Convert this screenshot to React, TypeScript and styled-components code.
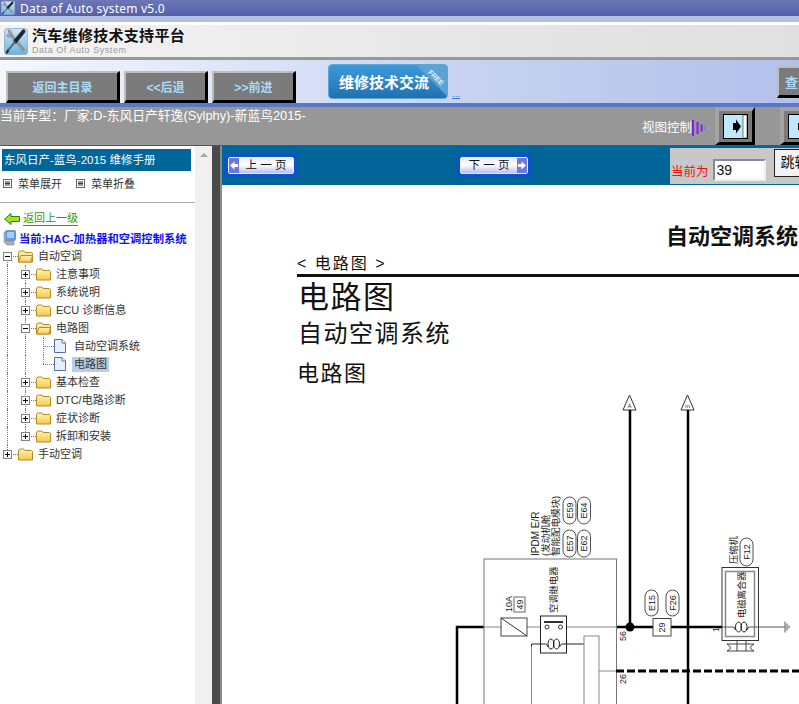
import styled, { createGlobalStyle } from "styled-components";

const GlobalStyle = createGlobalStyle`
  html, body {
    margin: 0;
    padding: 0;
    overflow: hidden;
    background: #fff;
  }
  * {
    box-sizing: border-box;
  }
`;

const CJK = `"Liberation Sans", "Noto Sans CJK SC", sans-serif`;

const Page = styled.div`
  width: 799px;
  height: 704px;
  overflow: hidden;
  display: flex;
  flex-direction: column;
  font-family: ${CJK};
`;

const TitleBar = styled.div`
  height: 16px;
  flex: none;
  display: flex;
  align-items: center;
  gap: 5px;
  padding-left: 1px;
  background: linear-gradient(to bottom, #6c77b8, #545fa8);
  color: #fff;
  font-family: "Noto Sans", sans-serif;
  font-size: 12px;
  letter-spacing: 0.2px;
`;

const TitleStrip = styled.div`
  height: 9px;
  flex: none;
  background: linear-gradient(to bottom, #b4c0e2 0, #b4c0e2 6px, #fff 6px);
`;

const Header = styled.div`
  height: 34px;
  flex: none;
  display: flex;
  align-items: center;
  gap: 4px;
  padding-left: 4px;
  background: linear-gradient(to right, #f4f4f4, #e4e4e4 70%, #e0e0e0);
  border-bottom: 2px solid #999;
`;

const BrandText = styled.div`
  display: flex;
  flex-direction: column;
  line-height: 1;
`;

const BrandName = styled.div`
  font-size: 15px;
  font-weight: 700;
  color: #111;
  letter-spacing: 0.3px;
  margin-bottom: 3px;
`;

const BrandSub = styled.div`
  font-size: 9px;
  letter-spacing: 0.55px;
  color: #999;
`;

const Toolbar = styled.div`
  height: 44px;
  flex: none;
  position: relative;
  display: flex;
  align-items: flex-end;
  padding-left: 6px;
  background: linear-gradient(to right, #f4f7fe, #c6d2f0 60%, #b3c0ea);
  border-top: 1px solid #8a93b0;
`;

const BevelButton = styled.button<{ $w: number; $ml?: number }>`
  width: ${(p) => p.$w}px;
  height: 32px;
  margin-left: ${(p) => p.$ml ?? 0}px;
  flex: none;
  padding: 0;
  background: #7b7b7b;
  border-style: solid;
  border-width: 2px 3px 3px 2px;
  border-color: #bdbdbd #000 #000 #bdbdbd;
  color: #a8dcfa;
  font-family: ${CJK};
  font-size: 12px;
  font-weight: 700;
`;

const ExchangeBlock = styled.div`
  display: flex;
  align-items: flex-end;
  align-self: flex-start;
  margin: 4px 0 0 32px;
  flex: none;
`;

const ExchangeButton = styled.div`
  position: relative;
  width: 120px;
  height: 35px;
  overflow: hidden;
  display: flex;
  align-items: center;
  padding-left: 10px;
  border-radius: 4px;
  background: linear-gradient(to bottom, #3d9ad8, #2c83c4 60%, #1f70ad);
  border: 1px solid #5aa6d8;
  color: #fff;
  font-size: 15px;
  font-weight: 700;
`;

const FreeCorner = styled.span`
  position: absolute;
  top: 0;
  right: 0;
  width: 31px;
  height: 31px;
  background: #5ba3d5;
  clip-path: polygon(0 0, 100% 0, 100% 100%);
`;

const FreeText = styled.span`
  position: absolute;
  top: 8px;
  left: 7px;
  width: 26px;
  text-align: center;
  transform: rotate(45deg);
  color: #e6f4fc;
  font-size: 7px;
  line-height: 9px;
  font-weight: 700;
`;

const MoreLink = styled.span`
  margin-left: 4px;
  color: #2b7de0;
  font-size: 10px;
  line-height: 8px;
  border-bottom: 1px solid #2b7de0;
`;

const QueryButton = styled(BevelButton)`
  margin-left: auto;
  align-self: flex-start;
  margin-top: 6px;
  margin-right: -30px;
  text-align: left;
  padding-left: 6px;
  font-size: 13px;
`;

const ToolbarEdge = styled.div`
  height: 4px;
  flex: none;
  background: #5a78c8;
`;

const ModelBar = styled.div`
  height: 39px;
  flex: none;
  display: flex;
  justify-content: space-between;
  background: #979797;
  color: #fff;
  font-size: 12.8px;
  border-bottom: 1px solid #555;
`;

const ModelText = styled.div`
  padding-top: 1px;
  line-height: 16px;
  white-space: nowrap;
`;

const ViewControls = styled.div`
  display: flex;
  align-items: flex-end;
  flex: none;
  width: 157px;
`;

const ViewLabel = styled.span`
  font-size: 12.5px;
  line-height: 16px;
  margin-bottom: 9px;
  white-space: nowrap;
`;

const ViewButton = styled.div<{ $ml: number }>`
  width: 40px;
  height: 38px;
  flex: none;
  margin-left: ${(p) => p.$ml}px;
  display: flex;
  align-items: center;
  justify-content: center;
  background: #7b7b7b;
  border-style: solid;
  border-width: 4px 3px 3px 4px;
  border-color: #a3a3a3 #000 #000 #a3a3a3;
`;

const Main = styled.div`
  flex: 1;
  min-height: 0;
  display: flex;
`;

const Sidebar = styled.div`
  width: 195px;
  flex: none;
  padding-top: 3px;
  background: #fff;
  color: #333;
  font-size: 12px;
`;

const ManualTitle = styled.div`
  height: 22px;
  margin: 0 4px 0 2px;
  padding-left: 2px;
  line-height: 22px;
  background: #006699;
  color: #fff;
  font-size: 11.5px;
  white-space: nowrap;
`;

const MenuRow = styled.div`
  height: 31px;
  display: flex;
  align-items: center;
  padding: 0 0 7px 3px;
`;

const MenuItem = styled.span`
  display: flex;
  align-items: center;
  gap: 6px;
  width: 73px;
  font-size: 11px;
`;

const Divider = styled.div`
  height: 1px;
  background: #aaa;
`;

const BackRow = styled.div`
  height: 19px;
  margin-top: 6px;
  display: flex;
  align-items: center;
  gap: 3px;
  padding-left: 4px;
`;

const BackLink = styled.span`
  color: #2e9a10;
  font-size: 11px;
  line-height: 14px;
  border-bottom: 1px solid #2e9a10;
`;

const CurrentRow = styled.div`
  height: 19px;
  display: flex;
  align-items: center;
  gap: 3px;
  padding-left: 3px;
  color: #1010f0;
  font-size: 11.3px;
  font-weight: 700;
  white-space: nowrap;
`;

const TreeLine = styled.div<{ $leaf?: boolean; $level: number }>`
  position: relative;
  height: 18px;
  display: flex;
  align-items: center;
  padding-left: ${(p) => (p.$leaf ? 54 : 3 + p.$level * 18)}px;
  font-size: 11px;
  white-space: nowrap;
`;

const Guide = styled.i<{ $half?: boolean; $start?: boolean }>`
  position: absolute;
  top: ${(p) => (p.$start ? "50%" : "0")};
  height: ${(p) => (p.$half || p.$start ? "50%" : "100%")};
  width: 0;
  border-left: 1px dotted #777;
`;

const Branch = styled.i`
  position: absolute;
  top: 50%;
  width: 11px;
  height: 0;
  border-top: 1px dotted #777;
`;

const Expander = styled.span<{ $open?: boolean }>`
  position: relative;
  z-index: 1;
  width: 9px;
  height: 9px;
  flex: none;
  margin-right: 6px;
  background: #fff;
  border: 1px solid #808080;

  &::before {
    content: "";
    position: absolute;
    left: 1px;
    top: 3px;
    width: 5px;
    height: 1px;
    background: #000;
  }

  &::after {
    content: "";
    display: ${(p) => (p.$open ? "none" : "block")};
    position: absolute;
    left: 3px;
    top: 1px;
    width: 1px;
    height: 5px;
    background: #000;
  }
`;

const NodeLabel = styled.span<{ $selected?: boolean; $leaf?: boolean }>`
  margin-left: ${(p) => (p.$selected ? 6 : p.$leaf ? 8 : 5)}px;
  padding: 0 ${(p) => (p.$selected ? 2 : 0)}px;
  line-height: 15px;
  background: ${(p) => (p.$selected ? "#b9cde8" : "transparent")};
`;

const Scrollbar = styled.div`
  width: 17px;
  flex: none;
  display: flex;
  justify-content: center;
  padding-top: 7px;
  background: #f0f0f0;
`;

const ScrollArrow = styled.div`
  width: 0;
  height: 0;
  border-left: 4px solid transparent;
  border-right: 4px solid transparent;
  border-bottom: 4px solid #a8a8a8;
`;

const Splitter = styled.div`
  width: 10px;
  flex: none;
  background: #4a4a4a;
  border-right: 2px solid #8a8a8a;
`;

const Content = styled.div`
  flex: 1;
  min-width: 0;
  display: flex;
  flex-direction: column;
  overflow: hidden;
`;

const PagerBar = styled.div`
  position: relative;
  height: 39px;
  flex: none;
  display: flex;
  align-items: flex-start;
  padding: 7px 0 0 2px;
  background: #006699;
`;

const PagerFrame = styled.div<{ $ml?: number }>`
  margin-left: ${(p) => p.$ml ?? 0}px;
  padding: 4px;
  background: #0a55c0;
`;

const PagerButton = styled.div<{ $w: number }>`
  width: ${(p) => p.$w}px;
  height: 17px;
  display: flex;
  align-items: stretch;
  border: 1px solid #eef0ff;
  border-radius: 2px;
  overflow: hidden;
  background: linear-gradient(to bottom, #e8eafc, #fff 45%, #b9bdf0);
  color: #111;
  font-size: 11.5px;
  line-height: 15px;
`;

const PagerLabel = styled.span`
  flex: 1;
  text-align: center;
  white-space: nowrap;
`;

const PagerArrow = styled.span`
  width: 10px;
  flex: none;
  display: flex;
  align-items: center;
  justify-content: center;
  background: #6a78e0;
`;

const JumpPanel = styled.div`
  position: absolute;
  top: 2px;
  left: 448px;
  height: 36px;
  display: flex;
  align-items: flex-start;
  background: #c8c8c8;
`;

const CurrentLabel = styled.span`
  flex: none;
  margin: 16px 0 0 1px;
  color: #f01010;
  font-size: 12.5px;
  line-height: 16px;
  white-space: nowrap;
`;

const PageInput = styled.div`
  flex: none;
  width: 53px;
  height: 22px;
  margin: 11px 0 0 4px;
  padding-left: 2px;
  background: #fff;
  border-style: solid;
  border-width: 2px;
  border-color: #8a8a8a #eee #eee #8a8a8a;
  color: #111;
  font-size: 14px;
  line-height: 18px;
`;

const JumpButton = styled.div`
  flex: none;
  width: 48px;
  height: 28px;
  margin: 1px 0 0 8px;
  padding-left: 6px;
  background: #f2f2f2;
  border: 1px solid #222;
  border-right: none;
  color: #111;
  font-size: 14px;
  line-height: 24px;
  white-space: nowrap;
`;

const Doc = styled.div`
  flex: 1;
  min-height: 0;
  overflow: hidden;
  padding-top: 38px;
  background: #fff;
  color: #111;
  font-family: ${CJK};
`;

const DocTitle = styled.div`
  margin-left: 444px;
  height: 27px;
  font-size: 22px;
  line-height: 27px;
  font-weight: 700;
  white-space: nowrap;
`;

const SectionTag = styled.div`
  margin: 4px 0 0 75px;
  height: 20px;
  font-size: 16px;
  line-height: 20px;
  letter-spacing: 2px;
  white-space: nowrap;
`;

const SectionRule = styled.div`
  margin-left: 75px;
  height: 3px;
  background: #111;
`;

const DocHeading = styled.div<{ $size: number; $h: number; $ml: number; $mt?: number }>`
  margin: ${(p) => p.$mt ?? 0}px 0 0 ${(p) => p.$ml}px;
  height: ${(p) => p.$h}px;
  font-size: ${(p) => p.$size}px;
  line-height: ${(p) => p.$h}px;
  letter-spacing: 1.5px;
  white-space: nowrap;
`;

const Diagram = styled.svg`
  display: block;
  flex: none;
  font-family: ${CJK};
`;

function AppIcon({ w, h }: { w: number; h: number }) {
  return (
    <svg width={w} height={h} viewBox="0 0 32 32" preserveAspectRatio="none" style={{ flex: "none" }}>
      <defs>
        <linearGradient id="appBg" x1="0" y1="0" x2="0" y2="1">
          <stop offset="0" stopColor="#cfe6f6" />
          <stop offset="1" stopColor="#6fb2de" />
        </linearGradient>
      </defs>
      <rect x="0.5" y="0.5" width="31" height="31" rx="4" fill="url(#appBg)" stroke="#7fa8c8" />
      <path d="M8 7 L27 27" stroke="#8d949c" strokeWidth="4" />
      <path d="M3 9 L7 11 L11 7 L9 3 L5 2 L7 6 L6 7 Z" fill="#a2a8b0" stroke="#666" strokeWidth="0.6" />
      <path d="M26 4 L15 16" stroke="#1c2430" strokeWidth="5" strokeLinecap="round" />
      <path d="M15 16 L5 27" stroke="#566878" strokeWidth="2.5" />
      <path d="M6 26 L3 30" stroke="#20303c" strokeWidth="3" />
    </svg>
  );
}

function MenuIcon() {
  return (
    <svg width="9" height="9" viewBox="0 0 9 9" style={{ flex: "none" }}>
      <rect x="0.5" y="0.5" width="8" height="8" fill="#fff" stroke="#666" />
      <path d="M2 3H7M2 4.5H7M2 6H7" stroke="#333" />
    </svg>
  );
}

function FolderIcon({ open }: { open?: boolean }) {
  return (
    <svg width="15" height="13" viewBox="0 0 15 13" style={{ flex: "none" }}>
      <defs>
        <linearGradient id="folderFill" x1="0" y1="0" x2="0" y2="1">
          <stop offset="0" stopColor="#fff3b8" />
          <stop offset="1" stopColor="#f3c94c" />
        </linearGradient>
      </defs>
      <path d="M0.5 3 L1.5 1 H6 L7 2.5 H13.5 L14.5 3.5 V12 H0.5 Z" fill="url(#folderFill)" stroke="#b98c22" />
      {open && <path d="M0.5 12 L3 5.5 H14.5 L13 12 Z" fill="url(#folderFill)" stroke="#b98c22" />}
    </svg>
  );
}

function DocIcon() {
  return (
    <svg width="12" height="14" viewBox="0 0 12 14" style={{ flex: "none" }}>
      <path d="M0.5 0.5 H8 L11.5 4 V13.5 H0.5 Z" fill="#e8f0fb" stroke="#5a6cb0" />
      <path d="M8 0.5 V4 H11.5" fill="#fff" stroke="#5a6cb0" />
    </svg>
  );
}

function BackIcon() {
  return (
    <svg width="16" height="12" viewBox="0 0 16 12" style={{ flex: "none" }}>
      <path d="M0.5 6 L7 0.5 V3.5 H15.5 V8.5 H7 V11.5 Z" fill="#a8e020" stroke="#1f8a10" />
    </svg>
  );
}

function ComputerIcon() {
  return (
    <svg width="13" height="16" viewBox="0 0 13 16" style={{ flex: "none" }}>
      <rect x="2.5" y="0.5" width="10" height="10" rx="1" fill="#5a9ae8" stroke="#8a94a8" />
      <rect x="4" y="2" width="7" height="6" fill="#9cd0f8" />
      <path d="M1 2 V12 L4 15 H11 V11 H3 V2 Z" fill="#a8b0c0" stroke="#70788c" strokeWidth="0.5" />
    </svg>
  );
}

function SpeakerBars() {
  return (
    <svg width="20" height="16" viewBox="0 0 20 16" style={{ flex: "none", marginBottom: 9 }}>
      <path d="M1 0V16" stroke="#8020f0" strokeWidth="2" />
      <path d="M5.5 2V14" stroke="#8020f0" strokeWidth="2" />
      <path d="M9.5 4.5V11.5" stroke="#8020f0" strokeWidth="2" />
      <path d="M13 6.5V10" stroke="#a060f0" strokeWidth="1.5" />
      <path d="M16 8H18" stroke="#b090f0" strokeWidth="1.5" />
    </svg>
  );
}

function ViewIcon({ bar }: { bar?: boolean }) {
  return (
    <svg width="25" height="25" viewBox="0 0 25 25">
      <rect x="0.5" y="0.5" width="24" height="24" fill="#bdeaff" stroke="#000" />
      <path d="M10 9H13V5.5L18 12.5L13 19.5V16H10Z" fill="#000" />
      {bar && <rect x="20" y="1" width="4" height="23" fill="#fff" stroke="#000" strokeWidth="0.5" />}
    </svg>
  );
}

function PagerGlyph({ left }: { left?: boolean }) {
  return (
    <svg width="8" height="9" viewBox="0 0 8 9" style={left ? { transform: "scaleX(-1)" } : undefined}>
      <path d="M0 3H3.5V0.5L8 4.5L3.5 8.5V6H0Z" fill="#fff" />
    </svg>
  );
}

interface ITreeNode {
  label: string;
  level: number;
  kind: "plus" | "minus" | "leaf";
  guides: { x: number; half?: boolean; start?: boolean }[];
  selected?: boolean;
}

const nested = (x: number, half?: boolean) => [{ x: 7 }, { x, half }];

const treeNodes: ITreeNode[] = [
  { label: "自动空调", level: 0, kind: "minus", guides: [{ x: 7, start: true }] },
  { label: "注意事项", level: 1, kind: "plus", guides: nested(25) },
  { label: "系统说明", level: 1, kind: "plus", guides: nested(25) },
  { label: "ECU 诊断信息", level: 1, kind: "plus", guides: nested(25) },
  { label: "电路图", level: 1, kind: "minus", guides: nested(25) },
  { label: "自动空调系统", level: 2, kind: "leaf", guides: [...nested(25), { x: 43 }] },
  { label: "电路图", level: 2, kind: "leaf", guides: [...nested(25), { x: 43, half: true }], selected: true },
  { label: "基本检查", level: 1, kind: "plus", guides: nested(25) },
  { label: "DTC/电路诊断", level: 1, kind: "plus", guides: nested(25) },
  { label: "症状诊断", level: 1, kind: "plus", guides: nested(25) },
  { label: "拆卸和安装", level: 1, kind: "plus", guides: nested(25, true) },
  { label: "手动空调", level: 0, kind: "plus", guides: [{ x: 7, half: true }] },
];

function TreeRow({ node }: { node: ITreeNode }) {
  const leaf = node.kind === "leaf";
  const branchLeft = leaf ? 43 : node.level === 1 ? 25 : 7;
  return (
    <TreeLine $leaf={leaf} $level={node.level}>
      {node.guides.map((g) => (
        <Guide key={g.x} $half={g.half} $start={g.start} style={{ left: g.x }} />
      ))}
      <Branch style={{ left: branchLeft }} />
      {leaf ? (
        <DocIcon />
      ) : (
        <>
          <Expander $open={node.kind === "minus"} />
          <FolderIcon open={node.kind === "minus"} />
        </>
      )}
      <NodeLabel $leaf={leaf} $selected={node.selected}>
        {node.label}
      </NodeLabel>
    </TreeLine>
  );
}

function VText({
  x,
  y,
  size,
  anchor = "start",
  children,
}: {
  x: number;
  y: number;
  size: number;
  anchor?: "start" | "middle";
  children: string;
}) {
  return (
    <text x={x} y={y} fontSize={size} fill="#222" textAnchor={anchor} transform={`rotate(-90 ${x} ${y})`}>
      {children}
    </text>
  );
}

function Capsule({ x, y, w, h, label }: { x: number; y: number; w: number; h: number; label: string }) {
  return (
    <g>
      <rect x={x} y={y} width={w} height={h} rx={w / 2} fill="#fff" stroke="#222" strokeWidth="0.8" />
      <VText x={x + w / 2 + 3} y={y + h / 2} size={9} anchor="middle">
        {label}
      </VText>
    </g>
  );
}

function Coil({ x, y }: { x: number; y: number }) {
  return (
    <g fill="none" stroke="#222">
      <path d={`M${x} ${y}q1.5 0 2.5 3M${x + 14} ${y + 3}q1 -3 2.5 -3`} />
      <ellipse cx={x + 5.5} cy={y} rx="3" ry="5" />
      <ellipse cx={x + 11} cy={y} rx="3" ry="5" />
    </g>
  );
}

function CircuitDiagram() {
  return (
    <Diagram width="577" height="315" viewBox="222 389 577 315">
      {/* connectors */}
      <path d="M623 410L629.5 395L636 410Z" fill="#fff" stroke="#333" />
      <path d="M681 410L687.5 395L694 410Z" fill="#fff" stroke="#333" />
      <text x="629.5" y="408" fontSize="6" textAnchor="middle" fill="#333">A</text>
      <text x="687.5" y="408" fontSize="6" textAnchor="middle" fill="#333">m</text>

      {/* thick wires */}
      <path d="M630 410V627" stroke="#000" strokeWidth="2.5" />
      <path d="M616 627H653M671 627H722" stroke="#000" strokeWidth="2.5" />
      <path d="M484 627H457V704" fill="none" stroke="#000" strokeWidth="2.5" />
      <circle cx="630" cy="627" r="4.5" fill="#000" />

      {/* IPDM */}
      <rect x="484" y="559" width="132.5" height="160" fill="none" stroke="#777" />
      <path d="M484 627H501M527 627H540M566 627H616" stroke="#888" />
      <rect x="501" y="618" width="26" height="18" fill="#fff" stroke="#444" />
      <path d="M501 618L527 636" stroke="#333" />
      <rect x="514" y="597" width="11" height="15" fill="#fff" stroke="#666" />
      <VText x="523" y="604.5" size={9} anchor="middle">49</VText>
      <VText x="512" y="604" size={9} anchor="middle">10A</VText>

      {/* relay */}
      <rect x="540.5" y="616" width="26" height="37" fill="#fff" stroke="#222" />
      <path d="M544 622H563" stroke="#333" strokeWidth="2" />
      <circle cx="547" cy="627" r="2" fill="#fff" stroke="#333" />
      <circle cx="560.5" cy="627" r="2" fill="#fff" stroke="#333" />
      <path d="M531.5 704V644H545.5M562 644H584" fill="none" stroke="#222" />
      <path d="M531.5 704V646" stroke="#888" />
      <Coil x={545.5} y={644} />
      <VText x="557" y="613" size={9.3}>空调继电器</VText>
      <rect x="584" y="636" width="15" height="80" fill="#fff" stroke="#888" />
      <path d="M599 671H616" stroke="#888" />

      {/* dashed wire */}
      <path d="M616 671H799" stroke="#000" strokeWidth="3" strokeDasharray="8 3" />
      <path d="M688 410V704" stroke="#000" strokeWidth="2.5" />

      {/* labels at the IPDM */}
      <VText x="539" y="556" size={10}>IPDM E/R</VText>
      <VText x="549" y="556" size={9.5}>(发动机舱</VText>
      <VText x="559" y="556" size={9.5}>智能配电模块)</VText>
      <Capsule x={563} y={497} w={13} h={27} label="E59" />
      <Capsule x={577.5} y={497} w={13} h={27} label="E64" />
      <Capsule x={563} y={530} w={13} h={27} label="E57" />
      <Capsule x={577.5} y={530} w={13} h={27} label="E62" />
      <VText x="626" y="641" size={9}>56</VText>
      <VText x="626" y="684" size={9}>26</VText>

      {/* harness connector */}
      <Capsule x={645} y={590} w={13} h={26} label="E15" />
      <Capsule x={666} y={590} w={13} h={26} label="F26" />
      <rect x="653" y="618.5" width="18" height="17.5" fill="#fff" stroke="#444" />
      <VText x="665" y="627.5" size={9} anchor="middle">29</VText>

      {/* compressor */}
      <VText x="719" y="632" size={9}>1</VText>
      <VText x="737" y="564" size={9.3}>压缩机</VText>
      <Capsule x={740} y={538} w={13} h={28} label="F12" />
      <rect x="722" y="567.5" width="36.5" height="73" fill="#fff" stroke="#333" />
      <rect x="725.5" y="571.5" width="29" height="65" fill="none" stroke="#888" strokeWidth="1.5" />
      <VText x="745" y="618" size={9.3}>电磁离合器</VText>
      <path d="M722 627H733M749.5 627H785" stroke="#555" />
      <Coil x={733} y={627} />
      <path d="M785 621.5V632.5M787 623.5V630.5M789 625.5V628.5" stroke="#555" />
      <path d="M737 640.5V651M746 640.5V651M727 644H754M727 651H754" stroke="#444" />
      <path d="M727 644Q734 648 727 651M754 644Q747 648 754 651" fill="none" stroke="#444" />
    </Diagram>
  );
}

export default function App() {
  return (
    <>
      <GlobalStyle />
      <Page>
        <TitleBar>
          <AppIcon w={14} h={14} />
          Data of Auto system v5.0
        </TitleBar>
        <TitleStrip />
        <Header>
          <AppIcon w={24} h={27} />
          <BrandText>
            <BrandName>汽车维修技术支持平台</BrandName>
            <BrandSub>Data Of Auto System</BrandSub>
          </BrandText>
        </Header>
        <Toolbar>
          <BevelButton $w={114}>返回主目录</BevelButton>
          <BevelButton $w={84} $ml={4}>&lt;&lt;后退</BevelButton>
          <BevelButton $w={84} $ml={4}>&gt;&gt;前进</BevelButton>
          <ExchangeBlock>
            <ExchangeButton>
              维修技术交流
              <FreeCorner>
                <FreeText>FREE</FreeText>
              </FreeCorner>
            </ExchangeButton>
            <MoreLink>...</MoreLink>
          </ExchangeBlock>
          <QueryButton $w={52}>查询</QueryButton>
        </Toolbar>
        <ToolbarEdge />
        <ModelBar>
          <ModelText>当前车型：厂家:D-东风日产轩逸(Sylphy)-新蓝鸟2015-</ModelText>
          <ViewControls>
            <ViewLabel>视图控制</ViewLabel>
            <SpeakerBars />
            <ViewButton $ml={3}>
              <ViewIcon bar />
            </ViewButton>
            <ViewButton $ml={25}>
              <ViewIcon />
            </ViewButton>
          </ViewControls>
        </ModelBar>
        <Main>
          <Sidebar>
            <ManualTitle>东风日产-蓝鸟-2015 维修手册</ManualTitle>
            <MenuRow>
              <MenuItem>
                <MenuIcon />
                菜单展开
              </MenuItem>
              <MenuItem>
                <MenuIcon />
                菜单折叠
              </MenuItem>
            </MenuRow>
            <Divider />
            <BackRow>
              <BackIcon />
              <BackLink>返回上一级</BackLink>
            </BackRow>
            <CurrentRow>
              <ComputerIcon />
              当前:HAC-加热器和空调控制系统
            </CurrentRow>
            <div>
              {treeNodes.map((node, i) => (
                <TreeRow key={i} node={node} />
              ))}
            </div>
          </Sidebar>
          <Scrollbar>
            <ScrollArrow />
          </Scrollbar>
          <Splitter />
          <Content>
            <PagerBar>
              <PagerFrame>
                <PagerButton $w={66}>
                  <PagerArrow>
                    <PagerGlyph left />
                  </PagerArrow>
                  <PagerLabel>上 一 页</PagerLabel>
                </PagerButton>
              </PagerFrame>
              <PagerFrame $ml={158}>
                <PagerButton $w={68}>
                  <PagerLabel>下 一 页</PagerLabel>
                  <PagerArrow>
                    <PagerGlyph />
                  </PagerArrow>
                </PagerButton>
              </PagerFrame>
              <JumpPanel>
                <CurrentLabel>当前为</CurrentLabel>
                <PageInput>39</PageInput>
                <JumpButton>跳转</JumpButton>
              </JumpPanel>
            </PagerBar>
            <Doc>
              <DocTitle>自动空调系统</DocTitle>
              <SectionTag>&lt; 电路图 &gt;</SectionTag>
              <SectionRule />
              <DocHeading $size={31} $h={42} $ml={76}>电路图</DocHeading>
              <DocHeading $size={24} $h={30} $ml={76}>自动空调系统</DocHeading>
              <DocHeading $size={22} $h={30} $ml={75} $mt={10}>电路图</DocHeading>
              <CircuitDiagram />
            </Doc>
          </Content>
        </Main>
      </Page>
    </>
  );
}
